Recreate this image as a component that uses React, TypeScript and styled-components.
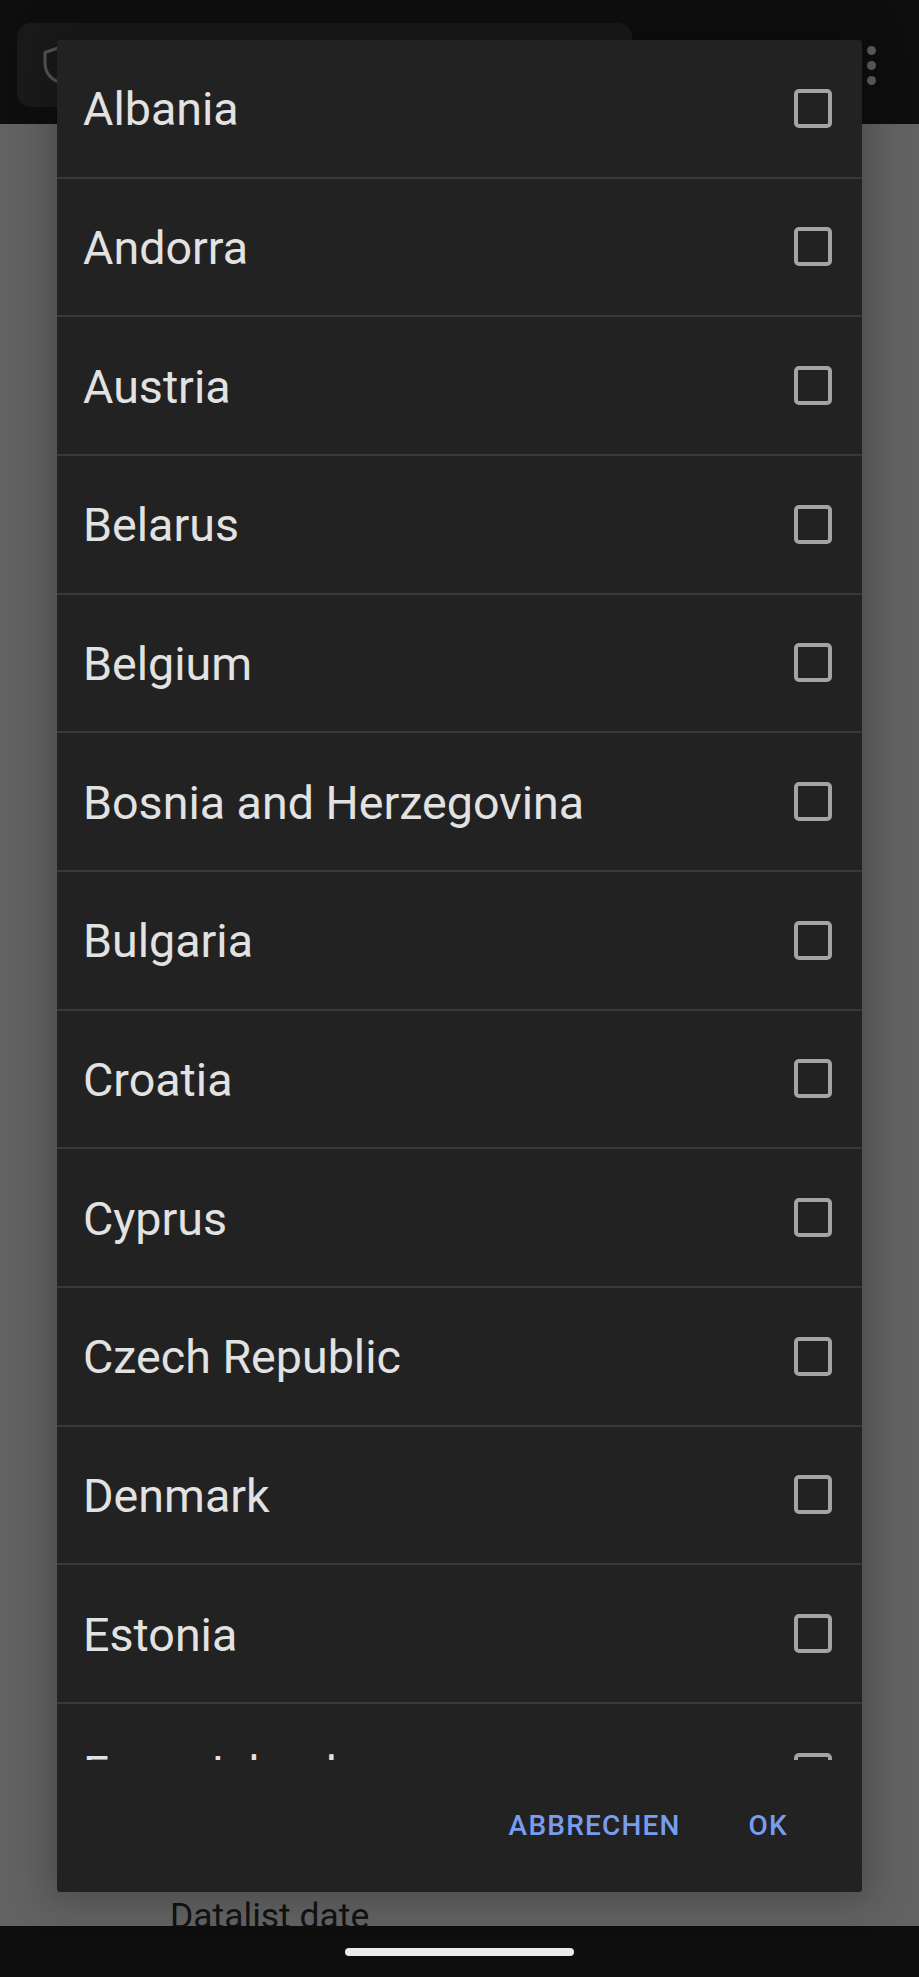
import React from "react";
import styled, { createGlobalStyle } from "styled-components";

const Global = createGlobalStyle`
  html, body { margin: 0; padding: 0; background: #0e0e0e; }
  body { font-family: Roboto, "Noto Sans", Arial, sans-serif; }
  * { box-sizing: border-box; }
`;

const Screen = styled.div`
  position: relative;
  width: 919px;
  height: 1977px;
  display: flex;
  flex-direction: column;
  overflow: hidden;
  background: #0e0e0e;
`;

const TopBar = styled.div`
  height: 124px;
  flex: none;
  background: #0e0e0e;
  display: flex;
  align-items: center;
  padding: 0 0 0 17px;
`;

const UrlBox = styled.div`
  width: 615px;
  height: 84px;
  margin-top: 6px;
  border-radius: 14px;
  background: #1a1a1a;
  display: flex;
  align-items: center;
  padding-left: 25px;
`;

const MenuDots = styled.div`
  margin-left: auto;
  margin-right: 43px;
  margin-top: 6px;
  display: flex;
  flex-direction: column;
  gap: 6px;
  & > span {
    width: 9px;
    height: 9px;
    border-radius: 50%;
    background: #5f5f5f;
  }
`;

const Content = styled.div`
  flex: 1;
  background: #626262;
  display: flex;
  flex-direction: column;
  justify-content: flex-end;
  overflow: hidden;
`;

const PageLabel = styled.div`
  font-family: Roboto, sans-serif;
  font-size: 35.5px;
  line-height: 35px;
  color: #121212;
  padding-left: 170px;
  margin-bottom: -7.5px;
`;

const NavBar = styled.div`
  height: 51px;
  flex: none;
  background: #0e0e0e;
  display: flex;
  justify-content: center;
  padding-top: 22px;
`;

const Handle = styled.div`
  width: 229px;
  height: 8px;
  border-radius: 4px;
  background: #ebebeb;
`;

const Dialog = styled.div`
  position: absolute;
  top: 40px;
  left: 57px;
  width: 805px;
  height: 1852px;
  background: #222222;
  border-radius: 3px;
  box-shadow: 0 0 36px 10px rgba(0, 0, 0, 0.22);
  display: flex;
  flex-direction: column;
  overflow: hidden;
`;

const List = styled.div`
  height: 1720px;
  flex: none;
  overflow: hidden;
`;

const Row = styled.div`
  height: 138.67px;
  border-bottom: 2px solid #393939;
  display: flex;
  align-items: center;
  padding: 0 30px 0 26px;
`;

const RowLabel = styled.span`
  flex: 1;
  font-family: Roboto, sans-serif;
  font-size: 46.6px;
  color: #e2e2e2;
  white-space: nowrap;
  padding-top: 2px;
`;

const Check = styled.span`
  width: 38px;
  height: 39px;
  border: 4px solid #a4a4a4;
  border-radius: 5px;
  flex: none;
`;

const Actions = styled.div`
  flex: 1;
  display: flex;
  justify-content: flex-end;
  align-items: center;
  padding: 0 40px 2px 0;
`;

const ActionButton = styled.button`
  background: none;
  border: none;
  padding: 0 34px;
  height: 70px;
  font-family: Roboto, sans-serif;
  font-weight: 500;
  font-size: 28px;
  letter-spacing: 1.2px;
  color: #789df0;
  text-transform: uppercase;
  cursor: pointer;
`;

const countries = [
  "Albania",
  "Andorra",
  "Austria",
  "Belarus",
  "Belgium",
  "Bosnia and Herzegovina",
  "Bulgaria",
  "Croatia",
  "Cyprus",
  "Czech Republic",
  "Denmark",
  "Estonia",
  "Faroe Islands",
  "Finland",
];

const Shield = () => (
  <svg width="32" height="38" viewBox="0 0 32 38" fill="none">
    <path
      d="M16 2 L29 6.5 V17 C29 26 23.5 32.5 16 36 C8.5 32.5 3 26 3 17 V6.5 Z"
      stroke="#555"
      strokeWidth="3"
      strokeLinejoin="round"
    />
  </svg>
);

export default function App() {
  return (
    <>
      <Global />
      <Screen>
        <TopBar>
          <UrlBox>
            <Shield />
          </UrlBox>
          <MenuDots>
            <span />
            <span />
            <span />
          </MenuDots>
        </TopBar>
        <Content>
          <PageLabel>Datalist date</PageLabel>
        </Content>
        <NavBar>
          <Handle />
        </NavBar>
        <Dialog>
          <List>
            {countries.map((c) => (
              <Row key={c}>
                <RowLabel>{c}</RowLabel>
                <Check />
              </Row>
            ))}
          </List>
          <Actions>
            <ActionButton>Abbrechen</ActionButton>
            <ActionButton>OK</ActionButton>
          </Actions>
        </Dialog>
      </Screen>
    </>
  );
}
